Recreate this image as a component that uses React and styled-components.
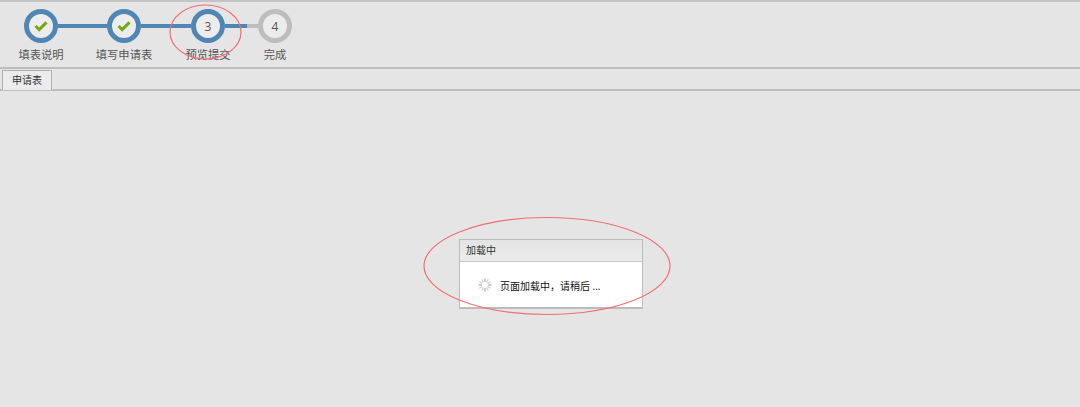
import React from 'react'
import styled, { createGlobalStyle } from 'styled-components'

const GlobalStyle = createGlobalStyle`
  *{
    margin: 0;
    padding: 0;
    box-sizing: border-box;
  }
  html, body{
    height: 100%;
    overflow: hidden;
  }
  body{
    background-color: #e5e5e5;
    font-family: "Open Sans", "Noto Sans CJK SC", sans-serif;
  }
`

const Page = styled.div`
  position: relative;
  width: 1080px;
  height: 407px;
  background-color: #e5e5e5;
  border-top: 2px solid #c4c4c4;
`

const StepBar = styled.div`
  display: flex;
  align-items: flex-start;
  height: 67px;
  padding: 7px 0 0 24px;
  border-bottom: 2px solid #bdbdbd;
`

const Step = styled.div`
  display: flex;
  flex-direction: column;
  align-items: center;
  width: 34px;
  gap: 4px;
`

const Circle = styled.div`
  display: flex;
  align-items: center;
  justify-content: center;
  width: 34px;
  height: 34px;
  border-radius: 50%;
  border: 5px solid ${(p) => (p.$active ? '#4f86b3' : '#bdbdbd')};
  background-color: #ececec;
  color: #555;
  font-size: 12px;
  flex-shrink: 0;
`

const StepLabel = styled.span`
  font-size: 11.3px;
  line-height: 16px;
  color: #555;
  white-space: nowrap;
`

const Connector = styled.div`
  width: ${(p) => p.$width}px;
  height: 4px;
  margin-top: 15px;
  background-color: ${(p) => (p.$active ? '#4f86b3' : '#bdbdbd')};
  flex-shrink: 0;
`

const TabStrip = styled.div`
  display: flex;
  align-items: flex-end;
  height: 22px;
  padding-left: 2px;
  border-bottom: 2px solid #bdbdbd;
`

const Tab = styled.div`
  width: 50px;
  height: 20px;
  margin-bottom: -1px;
  border: 1px solid #b0b0b0;
  border-bottom: none;
  background-color: #ececec;
  font-size: 10px;
  line-height: 19px;
  text-align: center;
  color: #333;
`

const Content = styled.div`
  padding: 148px 0 0 459px;
`

const Dialog = styled.div`
  width: 184px;
  height: 70px;
  background-color: #fff;
  border: 1px solid #bcbcbc;
  border-bottom-width: 2px;
`

const DialogHeader = styled.div`
  height: 22px;
  padding-left: 6px;
  background: linear-gradient(#e4e4e4, #ececec);
  border-bottom: 1px solid #c8c8c8;
  font-size: 10px;
  line-height: 21px;
  color: #333;
`

const DialogBody = styled.div`
  display: flex;
  align-items: center;
  gap: 8px;
  height: 46px;
  padding-left: 18px;
  font-size: 10px;
  color: #111;
`

const Annotations = styled.svg`
  position: absolute;
  top: -2px;
  left: 0;
  pointer-events: none;
`

const CheckIcon = () => (
  <svg width="16" height="14" viewBox="0 0 16 14">
    <path d="M2.5 7 L6.2 10.6 L13.5 3.4" fill="none" stroke="#7aa516" strokeWidth="3" />
  </svg>
)

const Spinner = () => (
  <svg width="14" height="14" viewBox="0 0 14 14">
    {Array.from({ length: 12 }).map((_, i) => (
      <line
        key={i}
        x1="7"
        y1="0.5"
        x2="7"
        y2="4"
        stroke={i % 3 === 0 ? '#aaa' : '#cfcfcf'}
        strokeWidth="1.2"
        transform={`rotate(${i * 30} 7 7)`}
      />
    ))}
  </svg>
)

export default function App() {
  return (
    <Page>
      <GlobalStyle />
      <StepBar>
        <Step>
          <Circle $active><CheckIcon /></Circle>
          <StepLabel>填表说明</StepLabel>
        </Step>
        <Connector $active $width={49} />
        <Step>
          <Circle $active><CheckIcon /></Circle>
          <StepLabel>填写申请表</StepLabel>
        </Step>
        <Connector $active $width={50} />
        <Step>
          <Circle $active>3</Circle>
          <StepLabel>预览提交</StepLabel>
        </Step>
        <Connector $active $width={22} />
        <Connector $width={11} />
        <Step>
          <Circle>4</Circle>
          <StepLabel>完成</StepLabel>
        </Step>
      </StepBar>
      <TabStrip>
        <Tab>申请表</Tab>
      </TabStrip>
      <Content>
        <Dialog>
          <DialogHeader>加载中</DialogHeader>
          <DialogBody>
            <Spinner />
            <span>页面加载中，请稍后 ...</span>
          </DialogBody>
        </Dialog>
      </Content>
      <Annotations width="1080" height="407">
        <ellipse cx="205.5" cy="32" rx="35.5" ry="27" fill="none" stroke="#ef7070" strokeWidth="1.2" />
        <ellipse cx="547" cy="266" rx="123" ry="48.5" fill="none" stroke="#ef7070" strokeWidth="1.2" />
      </Annotations>
    </Page>
  )
}
